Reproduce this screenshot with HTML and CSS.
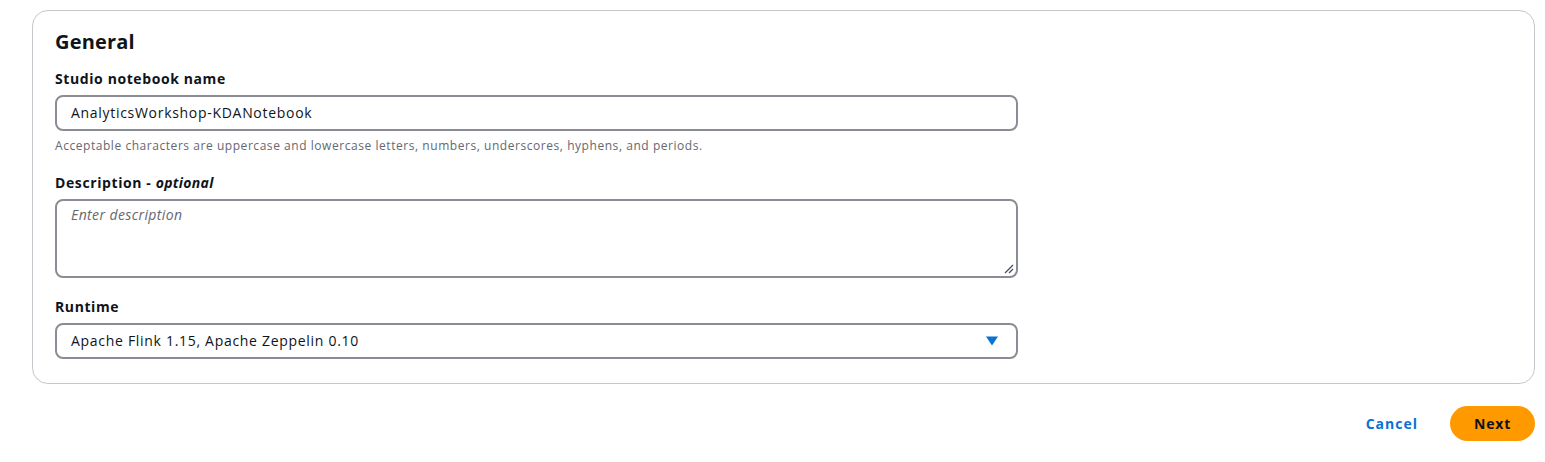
FILE: index.html
```html
<!DOCTYPE html>
<html>
<head>
<meta charset="utf-8">
<link rel="stylesheet" href="styles.css">
</head>
<body>
<div class="page">
  <section class="container">
    <h2 class="title">General</h2>
    <div class="field">
      <label class="label">Studio notebook name</label>
      <div class="input">AnalyticsWorkshop-KDANotebook</div>
      <div class="hint">Acceptable characters are uppercase and lowercase letters, numbers, underscores, hyphens, and periods.</div>
    </div>
    <div class="field">
      <label class="label">Description - <i>optional</i></label>
      <div class="textarea"><span class="placeholder">Enter description</span>
        <svg class="grip" width="12" height="12" viewBox="0 0 12 12"><path d="M11 3 L3 11 M11 7 L7 11" stroke="#414d5c" stroke-width="1.2" fill="none"/></svg>
      </div>
    </div>
    <div class="field last">
      <label class="label">Runtime</label>
      <div class="input select">
        <span>Apache Flink 1.15, Apache Zeppelin 0.10</span>
        <svg class="caret" width="12" height="10" viewBox="0 0 12 10"><path d="M0 0.5 H12 L6 9.5 Z" fill="#0972d3"/></svg>
      </div>
    </div>
  </section>
  <div class="actions">
    <button class="link">Cancel</button>
    <button class="primary">Next</button>
  </div>
</div>
</body>
</html>
```
FILE: styles.css
```css
* { box-sizing: border-box; }
body {
  margin: 0;
  background: #fff;
  font-family: "Open Sans", "Noto Sans", sans-serif;
  color: #0f141a;
}
.page {
  padding: 10px 10px 0 32px;
  width: 1545px;
}
.container {
  border: 1px solid #c6c6cd;
  border-radius: 16px;
  padding: 18px 22px 24px 22px;
}
.title {
  margin: 0 0 14px 0;
  font-size: 20px;
  line-height: 26px;
  font-weight: 700;
  letter-spacing: 0.2px;
}
.field { margin-bottom: 19px; }
.field.last { margin-bottom: 0; }
.label {
  display: block;
  font-size: 14px;
  font-weight: 700;
  line-height: 20px;
  margin-bottom: 6px;
  letter-spacing: 0.6px;
}
.label i { font-weight: 700; letter-spacing: 0.3px; }
.input, .textarea {
  width: 963px;
  border: 2px solid #8c8c94;
  border-radius: 8px;
  font-size: 14px;
  line-height: 20px;
  padding: 6px 14px;
  height: 36px;
  letter-spacing: 0.7px;
}
.textarea {
  height: 79px;
  padding: 4px 14px;
  position: relative;
  letter-spacing: 0.4px;
}
.placeholder { color: #656871; font-style: italic; }
.grip { position: absolute; right: 2px; bottom: 2px; }
.select {
  display: flex;
  align-items: center;
  justify-content: space-between;
  padding-right: 18px;
}
.hint {
  font-size: 12px;
  line-height: 16px;
  color: #656871;
  margin-top: 7px;
  letter-spacing: 0.55px;
}
.actions {
  display: flex;
  justify-content: flex-end;
  align-items: center;
  gap: 20px;
  margin-top: 22px;
}
button {
  font-family: inherit;
  font-size: 14px;
  font-weight: 700;
  border: none;
  cursor: pointer;
}
.link {
  background: none;
  color: #0972d3;
  padding: 0 12px;
  letter-spacing: 1px;
}
.primary {
  background: #ff9900;
  color: #0f141a;
  border-radius: 20px;
  height: 35px;
  width: 85px;
  letter-spacing: 0.8px;
}
```
